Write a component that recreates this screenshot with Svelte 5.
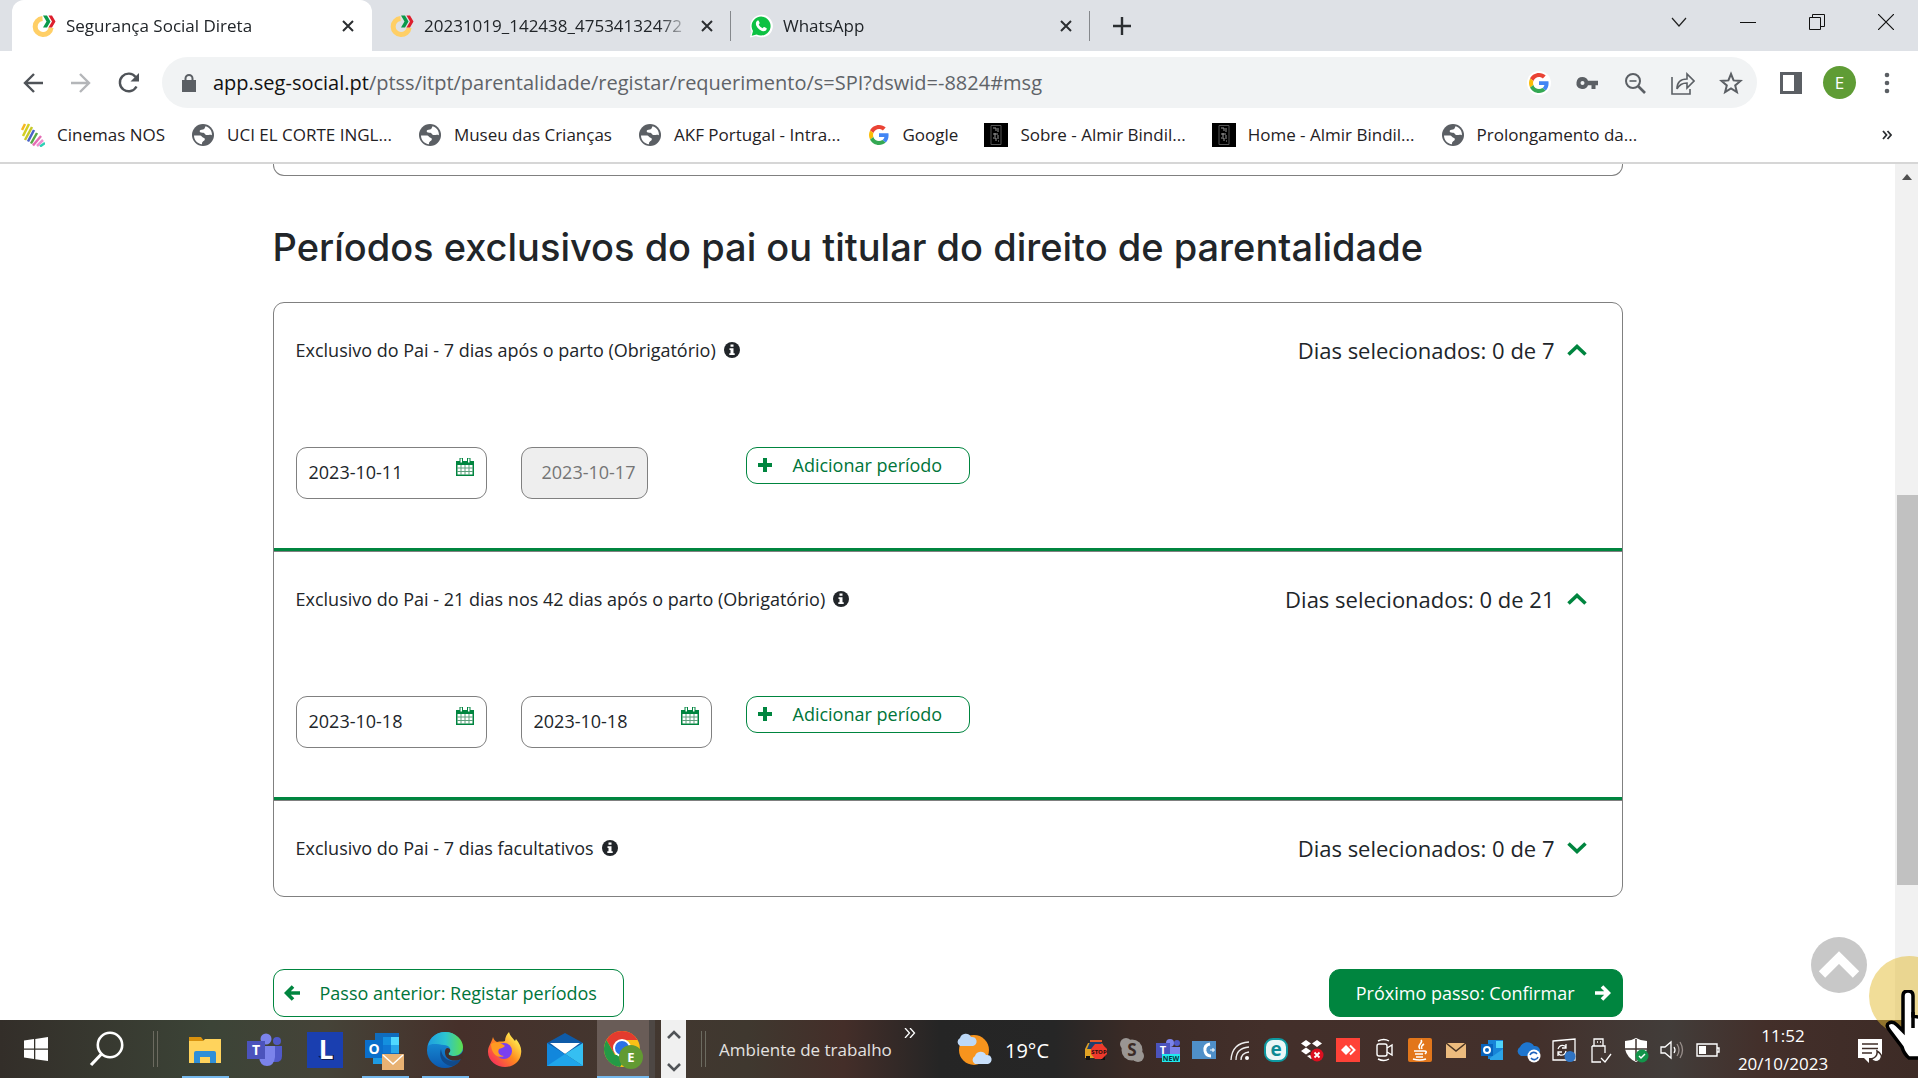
<script>
  const tabs = [
    { title: 'Segurança Social Direta', icon: 'ss', active: true },
    { title: '20231019_142438_47534132472', icon: 'ss', active: false },
    { title: 'WhatsApp', icon: 'wa', active: false },
  ];

  const bookmarks = [
    { icon: 'nos', label: 'Cinemas NOS' },
    { icon: 'globe', label: 'UCI EL CORTE INGL...' },
    { icon: 'globe', label: 'Museu das Crianças' },
    { icon: 'globe', label: 'AKF Portugal - Intra...' },
    { icon: 'google', label: 'Google' },
    { icon: 'dark', label: 'Sobre - Almir Bindil...' },
    { icon: 'dark', label: 'Home - Almir Bindil...' },
    { icon: 'globe', label: 'Prolongamento da...' },
  ];

  let sections = $state([
    {
      id: 'p7',
      label: 'Exclusivo do Pai - 7 dias após o parto (Obrigatório)',
      count: 'Dias selecionados: 0 de 7',
      open: true,
      from: '2023-10-11',
      to: '2023-10-17',
      locked: true,
    },
    {
      id: 'p21',
      label: 'Exclusivo do Pai - 21 dias nos 42 dias após o parto (Obrigatório)',
      count: 'Dias selecionados: 0 de 21',
      open: true,
      from: '2023-10-18',
      to: '2023-10-18',
      locked: false,
    },
    {
      id: 'f7',
      label: 'Exclusivo do Pai - 7 dias facultativos',
      count: 'Dias selecionados: 0 de 7',
      open: false,
      from: '',
      to: '',
      locked: false,
    },
  ]);

  const apps = [
    { name: 'Explorador', icon: 'explorer', running: true },
    { name: 'Teams', icon: 'teams', running: false },
    { name: 'L', icon: 'ell', running: false },
    { name: 'Outlook', icon: 'outlook', running: true },
    { name: 'Edge', icon: 'edge', running: true },
    { name: 'Firefox', icon: 'firefox', running: false },
    { name: 'Correio', icon: 'mail', running: false },
    { name: 'Chrome', icon: 'chrome', running: true },
  ];

  const tray = ['taxi', 'skype', 'teamsnew', 'phone', 'wifi', 'eset', 'dropbox', 'anydesk', 'camera', 'java', 'envelope', 'outlooksmall', 'onedrive', 'update', 'usb', 'shield', 'volume', 'battery'];
</script>

{#snippet google()}
  <svg width="20" height="20" viewBox="0 0 48 48" aria-hidden="true">
    <path fill="#EA4335" d="M24 9.5c3.54 0 6.71 1.22 9.21 3.6l6.85-6.85C35.9 2.38 30.47 0 24 0 14.62 0 6.51 5.38 2.56 13.22l7.98 6.19C12.43 13.72 17.74 9.5 24 9.5z" />
    <path fill="#4285F4" d="M46.98 24.55c0-1.57-.15-3.09-.38-4.55H24v9.02h12.94c-.58 2.96-2.26 5.48-4.78 7.18l7.73 6c4.51-4.18 7.09-10.36 7.09-17.65z" />
    <path fill="#FBBC05" d="M10.53 28.59c-.48-1.45-.76-2.99-.76-4.59s.27-3.14.76-4.59l-7.98-6.19C.92 16.46 0 20.12 0 24s.92 7.54 2.56 10.78l7.97-6.19z" />
    <path fill="#34A853" d="M24 48c6.48 0 11.93-2.13 15.89-5.81l-7.73-6c-2.15 1.45-4.92 2.3-8.16 2.3-6.26 0-11.57-4.22-13.47-9.91l-7.98 6.19C6.51 42.62 14.62 48 24 48z" />
  </svg>
{/snippet}

{#snippet siteIcon(name)}
  {#if name === 'ss'}
    <svg width="24" height="24" viewBox="0 0 24 24" aria-hidden="true">
      <path d="M10.5 4.6a8 8 0 1 0 8.6 9" fill="none" stroke="#ffcf66" stroke-width="5" />
      <path d="M11 1.500h4l3.500 5.900L15 13.500h-4l3.500-6.100z" fill="#0b9a4a" />
      <path d="M16.500 1.500h3.500l3.500 5.900-3.500 6.100h-3.500L20 7.400z" fill="#dd1f2d" />
    </svg>
  {:else if name === 'wa'}
    <svg width="24" height="24" viewBox="0 0 24 24" aria-hidden="true">
      <path d="M1 23.500 2.600 17.400A11.300 11.300 0 1 1 7 21.900z" fill="#fff" />
      <path d="M2.700 21.700 4 17a9.500 9.500 0 1 1 3.600 3.400z" fill="#0dc143" />
      <path d="M8.600 6.500c.5-.2 1-.1 1.200.4l.8 1.900c.1.500-.1.900-.9 1.700.9 1.800 2.100 3 4 3.800.8-1 1.100-1.400 1.600-1.200l2 1c.5.3.5.5.3 1.200-.5 1.500-1.900 2-3.200 1.900-3.900-.6-7.200-4.200-7.500-7.300-.1-1.500.7-3 1.700-3.400z" fill="#fff" />
    </svg>
  {:else if name === 'globe'}
    <svg width="24" height="24" viewBox="0 0 24 24" aria-hidden="true">
      <circle cx="12" cy="12" r="11" fill="#5b5f64" />
      <path d="M3 12.500h5.500c2.500 0 2.500 2 4 2.300 1.500.4 1.800 1.400.8 2.700-.9 1-2.300.8-2.300 3.800C6.500 20.800 3 17 3 12.500z" fill="#fff" />
      <path d="M14.500 3.300C13.500 5 14 6 12 6.500c-2 .4-3.500.3-3.300 2 .2 1.500 2.300 1 3.800 1.300 1.300.3 1.200 1.800 2.700 2.200 2 .5 3.300-.8 5.700.3.400-4.300-2.400-8-6.400-9z" fill="#fff" />
    </svg>
  {:else if name === 'nos'}
    <svg width="24" height="24" viewBox="0 0 24 24" aria-hidden="true" fill="none" stroke-width="2.500">
      <path d="M1 7 4 1" stroke="#f5b921" />
      <path d="M2 13 8 1" stroke="#d4cf24" />
      <path d="M4 17 11 4" stroke="#c6c92a" />
      <path d="M7 18.500 13 7" stroke="#4a63c8" />
      <path d="M10 20.500 16 10" stroke="#56a845" />
      <path d="M12 22.500 20 13" stroke="#e46cb4" />
      <path d="M16 23 22 17" stroke="#ef8ed0" />
      <path d="M19 23.500 24 20" stroke="#2fcfb4" />
    </svg>
  {:else if name === 'dark'}
    <svg width="24" height="24" viewBox="0 0 24 24" aria-hidden="true">
      <path d="M0 0h24v24H0z" fill="#000" />
      <path d="M7 2.500h10v19H7z" fill="none" stroke="#555" />
      <path d="M9 5h3v3m2-3v4m-5 2h5m-3-1v4m3-2v4M9 15h3v3m2 0h1" fill="none" stroke="#999" />
    </svg>
  {:else}
    {@render google()}
  {/if}
{/snippet}

{#snippet cross()}
  <svg width="12" height="12" viewBox="0 0 12 12" aria-hidden="true"><path d="M1 1 11 11M11 1 1 11" stroke="#2b2e31" stroke-width="2" /></svg>
{/snippet}

{#snippet calendar()}
  <svg width="18" height="18" viewBox="0 0 18 18" aria-hidden="true">
    <path d="M0 3h18v15H0z" fill="#00853f" />
    <path d="M1.500 7h15v9.500h-15z" fill="#fff" />
    <path d="M5 7v10M9 7v10M13 7v10M1 10h16M1 13.500h16" stroke="#5d9f7c" />
    <path d="M4 0h2.500v5H4zM11.500 0H14v5h-2.500z" fill="#fff" stroke="#00853f" />
  </svg>
{/snippet}

{#snippet appIcon(name)}
  {#if name === 'explorer'}
    <svg width="36" height="36" viewBox="0 0 36 36" aria-hidden="true">
      <path d="M2 5h12l3 4H2z" fill="#d9920e" />
      <path d="M2 9h14l2-2h16v24H2z" fill="#ffd35c" />
      <path d="M7 31V21q0-2 2-2h18q2 0 2 2v10h-6v-6H13v6z" fill="#2f8fd8" />
    </svg>
  {:else if name === 'teams'}
    <svg width="36" height="36" viewBox="0 0 36 36" aria-hidden="true">
      <circle cx="19" cy="7" r="5.500" fill="#7b83eb" />
      <circle cx="30" cy="9" r="4" fill="#5059c9" />
      <path d="M25 14h10v10q0 6-6 6h-4z" fill="#5059c9" />
      <path d="M12 14h16v11q-1 9-8 9t-8-9z" fill="#7b83eb" />
      <path d="M0 9h18v18H0z" fill="#4b53bc" />
      <text x="9" y="23" class="glyph" font-size="14">T</text>
    </svg>
  {:else if name === 'ell'}
    <svg width="36" height="36" viewBox="0 0 36 36" aria-hidden="true">
      <path d="M0 0h36v36H0z" fill="#1a3fb0" />
      <path d="M11 24 15 28h12V23z" fill="#0c1f55" />
      <text x="19" y="27" class="glyph" font-size="26">L</text>
    </svg>
  {:else if name === 'outlook'}
    <svg width="40" height="40" viewBox="0 0 40 40" aria-hidden="true">
      <path d="M10 3h24v26H10z" fill="#0f6cbd" />
      <path d="M18 7h8v8h-8z" fill="#1490df" /><path d="M26 7h8v8h-8z" fill="#50d9ff" />
      <path d="M26 15h8v8h-8z" fill="#28a8ea" /><path d="M18 15h8v8h-8z" fill="#0f78d4" />
      <path d="M8 24h20v10H8z" fill="#1e9be3" />
      <path d="M0 10h18v18H0z" fill="#0a6fcb" />
      <text x="9" y="24" class="glyph" font-size="14">O</text>
      <path d="M17 24h22v16H17z" fill="#e8b273" />
      <path d="m18 25 10 9 10-9" fill="none" stroke="#fff" stroke-width="1.500" />
    </svg>
  {:else if name === 'edge'}
    <svg width="36" height="36" viewBox="0 0 36 36" aria-hidden="true">
      <defs>
        <linearGradient id="edgeTop" x1="0" x2="1"><stop offset="0" stop-color="#1e9fe0" /><stop offset=".5" stop-color="#2cc4d0" /><stop offset="1" stop-color="#5fe04c" /></linearGradient>
        <linearGradient id="edgeBody" x1="0" x2="0" y1="0" y2="1"><stop offset="0" stop-color="#1a9de0" /><stop offset="1" stop-color="#0c59b0" /></linearGradient>
      </defs>
      <circle cx="18" cy="18" r="18" fill="url(#edgeBody)" />
      <path d="M1 14C3 5 10 0 18 0c11 0 18 8 18 15 0 6-5 9-9 9-5 0-6-2-5-3 3-4 0-8-5-8-7-1-13-2-16 1z" fill="url(#edgeTop)" />
      <path d="M14 17c-3 9 3 17 12 17 3-1 6-3 8-7-9 5-19 1-20-10z" fill="#114a8b" />
      <path d="M22 21c-1 1 0 3 5 3 4 0 7-1 9-5l1 6-3 2c-8 4-17 0-16-8 0-2 2-3 2-3 4 0 4 3 2 5z" fill="#432f2a" />
    </svg>
  {:else if name === 'firefox'}
    <svg width="36" height="36" viewBox="0 0 36 36" aria-hidden="true">
      <defs><linearGradient id="fox" x1="1" x2="0" y1="0" y2="1"><stop offset=".2" stop-color="#ffe14a" /><stop offset=".5" stop-color="#ff8a1e" /><stop offset="1" stop-color="#f5156c" /></linearGradient></defs>
      <path d="M22 0c1 4 3 5 6 9l1-2c4 5 6 9 5 15-1 8-8 13-16 13S1 29 1 20c0-6 3-8 5-15 1 3 2 4 4 5 3-1 6 0 8-1 0-4 2-7 4-9z" fill="url(#fox)" />
      <circle cx="17" cy="19" r="8" fill="#7a3ff0" />
      <path d="M4 12c5-3 10-1 14 2-2 2-4 2-6 3-2 4 1 7 5 7-6 3-13-2-13-12z" fill="#ff9a22" />
    </svg>
  {:else if name === 'mail'}
    <svg width="36" height="36" viewBox="0 0 36 36" aria-hidden="true">
      <path d="M0 11 18 1l18 10v10H0z" fill="#0e5ba8" />
      <path d="M3 11h30L18 22z" fill="#fff" />
      <path d="M0 11 18 22 36 34H0z" fill="#1287dc" />
      <path d="M36 11 18 22 36 34z" fill="#35bff2" />
      <path d="M0 34 18 22l18 12z" fill="#1fa5ea" />
    </svg>
  {:else}
    <svg width="40" height="40" viewBox="0 0 40 40" aria-hidden="true">
      <circle cx="19" cy="19" r="18" fill="#fbc116" />
      <path d="M3.400 10A18 18 0 0 1 34.600 10H19l-7.800 13.500z" fill="#e33b2e" />
      <path d="M3.400 10a18 18 0 0 0 13.600 27l8-12H12z" fill="#249a46" />
      <circle cx="19" cy="18" r="9" fill="#fff" /><circle cx="19" cy="18" r="7" fill="#2b72e8" />
      <circle cx="28" cy="27" r="12" fill="#629a32" />
      <text x="28" y="32" class="glyph" font-size="13">E</text>
    </svg>
  {/if}
{/snippet}

{#snippet trayIcon(name)}
  <svg width="26" height="26" viewBox="-1 -1 26 26" aria-hidden="true" fill="none" stroke="none">
    {#if name === 'taxi'}
      <path d="M6 2h12v2H6z" fill="#e25b2a" /><path d="M4 5h14l3 6v9H1v-9z" fill="#e0a224" /><path d="M6 4h11l3 7H3z" fill="#1f3f70" />
      <path d="M2 18h4v4H2zM17 18h4v4h-4z" fill="#111" />
      <path d="M11 6h7l5 5v5l-5 5h-7l-4-5v-5z" fill="#ee3a2c" />
      <text x="15" y="16" font-size="6" class="glyph" style:fill="#2a0d0a">STOP</text>
    {:else if name === 'skype'}
      <circle cx="12" cy="12" r="10.500" fill="#9a9693" /><circle cx="6" cy="6" r="6" fill="#9a9693" /><circle cx="18" cy="18" r="6" fill="#9a9693" />
      <text x="12" y="18" font-size="17" class="glyph" style:fill="#3b2b26">S</text>
    {:else if name === 'teamsnew'}
      <circle cx="14" cy="5" r="4" fill="#7b83eb" /><circle cx="21" cy="5" r="3" fill="#5059c9" /><path d="M12 9h12v9H12z" fill="#7b83eb" />
      <path d="M0 5h14v15H0z" fill="#4b53bc" /><text x="7" y="16" font-size="11" class="glyph">T</text>
      <path d="M6 16h18v8H6z" fill="#20e8ee" /><text x="15" y="23" font-size="7" class="glyph" style:fill="#05363c">NEW</text>
    {:else if name === 'phone'}
      <path d="M0 3h24v18H0z" fill="#4f8fc8" /><path d="M18 6q-6 1-5 7 1 5 6 5" stroke="#fff" stroke-width="3" /><path d="M18 12h5m-2-2v4" stroke="#fff" />
    {:else if name === 'wifi'}
      <g stroke="#eee" stroke-width="1.300"><path d="M3 22Q4 5 21 4M8 22Q8 10 21 9M13 22q0-7 8-8" /></g><circle cx="19" cy="20" r="2" fill="#fff" />
    {:else if name === 'eset'}
      <rect x="1" y="1" width="22" height="22" rx="8" fill="#e9f7f7" stroke="#0d98a0" stroke-width="2" /><text x="12" y="18" font-size="19" class="glyph" style:fill="#0b8a94">e</text>
    {:else if name === 'dropbox'}
      <path d="m6 2 5 3.500L6 9 1 5.500zM17 2l5 3.500L17 9l-5-3.500zM6 9.500l5 3.500-5 3.500L1 13zM7 18l4 3 2-2-3-2z" fill="#fff" />
      <circle cx="17" cy="17" r="6.500" fill="#dc1020" /><path d="m14.500 14.500 5 5m0-5-5 5" stroke="#fff" stroke-width="1.800" />
    {:else if name === 'anydesk'}
      <path d="M0 0h24v24H0z" fill="#ff4237" /><path d="m10 7 5 5-5 5-5-5z" fill="#fff" /><path d="m14 7.500 4.500 4.500-4.500 4.500" stroke="#fff" stroke-width="2" />
    {:else if name === 'camera'}
      <g stroke="#fff" stroke-width="1.400"><rect x="5" y="6" width="10" height="12" rx="2" /><path d="m15 10 5-3v10l-5-3M6 3q6-3 11 0M6 21q6 3 11 0" /></g>
    {:else if name === 'java'}
      <rect width="24" height="24" rx="2" fill="#e2761b" /><path d="M13 2c3 3-5 5-1 9M16 6c-3 2-3 3-2 5M6 13h10q4 0 1 3M7 16h8M8 19h7M5 21q7 2 13 0" stroke="#fff" stroke-width="1.600" />
    {:else if name === 'envelope'}
      <path d="M2 5h20v15H2z" fill="#ecbb7e" /><path d="m2 5 10 8 10-8" stroke="#4a3524" stroke-width="1.600" />
    {:else if name === 'outlooksmall'}
      <path d="M8 2h15v19H8z" fill="#1784d8" /><path d="M16 3h7v7h-7z" fill="#4fd4fa" /><path d="m10 20 13-9v11H10z" fill="#2ba4e8" /><path d="M1 6h12v12H1z" fill="#0864be" /><circle cx="7" cy="12" r="3" stroke="#fff" stroke-width="2" />
    {:else if name === 'onedrive'}
      <path d="M5 18a5 5 0 0 1-1-9 8 8 0 0 1 14-1 5 5 0 0 1 2 10z" fill="#1e76cf" /><circle cx="18" cy="18" r="6.500" fill="#fff" /><path d="M14 17a4 4 0 0 1 7-1m1 3a4 4 0 0 1-7 1" stroke="#1e62bd" stroke-width="1.600" />
    {:else if name === 'update'}
      <path d="M1 3 23 1v21H1z" stroke="#fff" stroke-width="1.300" /><path d="M6 11q2-5 7-3l1 2M14 13q-1 5-6 4l-2-2M14 6v4h-4M6 18v-4h4" stroke="#fff" stroke-width="1.300" /><circle cx="18" cy="18.500" r="5.500" fill="#2f74c4" />
    {:else if name === 'usb'}
      <path d="M6 8V1h9v7M4 8h13v7M4 8v16h9M9 4h1m2 0h1M13 20l4 4 6-8" stroke="#fff" stroke-width="1.300" />
    {:else if name === 'shield'}
      <path d="M12 0q5 3 11 3v8q-2 9-11 13Q3 20 1 11V3q6 0 11-3z" fill="#fff" /><path d="M12 1v22M1 11h22" stroke="#3f3530" stroke-width="1.500" /><circle cx="18" cy="18" r="6.500" fill="#12944a" /><path d="m15 18 2 2 4-4" stroke="#fff" stroke-width="1.500" />
    {:else if name === 'volume'}
      <path d="M1 9h4l6-5v16l-6-5H1z" stroke="#fff" stroke-width="1.300" /><path d="M14 9q2 3 0 6" stroke="#fff" stroke-width="1.300" /><path d="M17 6q4 6 0 12M20 4q5 8 0 16" stroke="#998f8b" stroke-width="1.300" />
    {:else}
      <path d="M1 6h20v12H1zM21 10h2v4h-2" stroke="#fff" stroke-width="1.400" /><path d="M3 8h7v8H3z" fill="#fff" />
    {/if}
  </svg>
{/snippet}

<div class="screen">
  <header class="browser">
    <div class="tabstrip">
      {#each tabs as tab}
        <div class="tab" class:active={tab.active}>
          {@render siteIcon(tab.icon)}
          <span class="tab-title">{tab.title}</span>
          <button class="plain" aria-label="Fechar separador">{@render cross()}</button>
        </div>
      {/each}
      <button class="plain new-tab" aria-label="Novo separador">
        <svg width="18" height="18" viewBox="0 0 18 18"><path d="M9 0v18M0 9h18" stroke="#2b2e31" stroke-width="2.400" /></svg>
      </button>
      <div class="window-controls">
        <button class="plain" aria-label="Pesquisar separadores"><svg width="16" height="16" viewBox="0 0 16 16"><path d="m1 4 7 8 7-8" fill="none" stroke="#222" stroke-width="1.200" /></svg></button>
        <button class="plain" aria-label="Minimizar"><svg width="16" height="16" viewBox="0 0 16 16"><path d="M0 8.500h16" stroke="#111" /></svg></button>
        <button class="plain" aria-label="Restaurar"><svg width="16" height="16" viewBox="0 0 16 16"><path d="M.5 3.500h11v12H.5zM3.500 3V.5h12v12H12" fill="none" stroke="#111" /></svg></button>
        <button class="plain" aria-label="Fechar"><svg width="16" height="16" viewBox="0 0 16 16"><path d="m0 0 16 16M16 0 0 16" stroke="#111" stroke-width="1.200" /></svg></button>
      </div>
    </div>

    <div class="toolbar">
      <button class="plain nav" aria-label="Retroceder"><svg width="22" height="22" viewBox="0 0 22 22"><path d="M21 11H3m9-9-9 9 9 9" fill="none" stroke="#4f5358" stroke-width="2.400" /></svg></button>
      <button class="plain nav" aria-label="Avançar"><svg width="22" height="22" viewBox="0 0 22 22"><path d="M1 11h18m-9-9 9 9-9 9" fill="none" stroke="#b4b6b9" stroke-width="2.400" /></svg></button>
      <button class="plain nav" aria-label="Atualizar"><svg width="22" height="22" viewBox="0 0 22 22"><path d="M18.500 14.500A8.800 8.800 0 1 1 17.600 5" fill="none" stroke="#4f5358" stroke-width="2.400" /><path d="M21 1v8.500h-8.500z" fill="#4f5358" /></svg></button>
      <div class="address">
        <svg width="14" height="18" viewBox="0 0 14 18" aria-hidden="true"><path d="M0 6h14v12H0z" fill="#5b5f64" /><path d="M3.500 7V4.500a3.500 3.500 0 0 1 7 0V7" fill="none" stroke="#5b5f64" stroke-width="2" /></svg>
        <span class="url"><b>app.seg-social.pt</b>/ptss/itpt/parentalidade/registar/requerimento/s=SPI?dswid=-8824#msg</span>
        <div class="address-actions">
          <button class="plain round" aria-label="Google">{@render google()}</button>
          <button class="plain" aria-label="Palavras-passe"><svg width="24" height="24" viewBox="0 0 24 24"><path d="M7.500 6a6 6 0 1 0 5.500 8.300h3.500V18h4v-3.700H23v-4.600H13A6 6 0 0 0 7.500 6zm0 4a2 2 0 1 1 0 4 2 2 0 0 1 0-4z" fill="#5b5f64" fill-rule="evenodd" /></svg></button>
          <button class="plain" aria-label="Zoom"><svg width="24" height="24" viewBox="0 0 24 24"><circle cx="10" cy="10" r="7" fill="none" stroke="#5b5f64" stroke-width="2" /><path d="m15 15 7 7" stroke="#5b5f64" stroke-width="2.600" /><path d="M6.500 10h7" stroke="#5b5f64" stroke-width="1.600" /></svg></button>
          <button class="plain" aria-label="Partilhar"><svg width="24" height="24" viewBox="0 0 24 24"><path d="M1 6v17h18v-5M6 18c0-6 3-10 10-10V3l7 7-7 7v-5c-5 0-8 2-10 6z" fill="none" stroke="#5b5f64" stroke-width="1.600" /></svg></button>
          <button class="plain" aria-label="Marcador"><svg width="24" height="24" viewBox="0 0 24 24"><path d="m12 3 2.600 6.400 6.900.5-5.300 4.500 1.700 6.800-5.900-3.700-5.900 3.700 1.700-6.800L2.500 9.900l6.900-.5z" fill="none" stroke="#5b5f64" stroke-width="2" /></svg></button>
        </div>
      </div>
      <button class="plain panel" aria-label="Painel lateral"><svg width="22" height="22" viewBox="0 0 22 22"><path d="M0 0h22v22H0z" fill="#5b5f64" /><path d="M3 3h11v16H3z" fill="#fff" /></svg></button>
      <button class="plain avatar" aria-label="Perfil">E</button>
      <button class="plain more" aria-label="Menu"><svg width="6" height="22" viewBox="0 0 6 22" fill="#5b5f64"><circle cx="3" cy="3" r="2.300" /><circle cx="3" cy="11" r="2.300" /><circle cx="3" cy="19" r="2.300" /></svg></button>
    </div>

    <nav class="bookmarks">
      {#each bookmarks as mark}
        <a href="#bookmark"><span class="mark-icon">{@render siteIcon(mark.icon)}</span>{mark.label}</a>
      {/each}
      <button class="plain overflow" aria-label="Mais marcadores"><svg width="10" height="10" viewBox="0 0 10 10"><path d="m1 1 3.500 4L1 9M5.500 1 9 5 5.500 9" fill="none" stroke="#2b2e31" stroke-width="1.800" /></svg></button>
    </nav>
  </header>

  <div class="viewport">
    <main>
      <div class="page">
        <div class="previous-card"></div>
        <h1>Períodos exclusivos do pai ou titular do direito de parentalidade</h1>
        <div class="card">
          {#each sections as section}
            <section>
              <div class="section-head">
                <h2>{section.label}</h2>
                <svg class="info" width="16" height="16" viewBox="0 0 16 16" aria-hidden="true"><circle cx="8" cy="8" r="8" fill="#212529" /><path d="M6.500 2.500h3v2.300h-3zM5.500 6.200h4v5h1.200V13H5.300v-1.800h1.200V8h-1z" fill="#fff" /></svg>
                <span class="count">{section.count}</span>
                <button class="plain" aria-label="Expandir ou recolher" aria-expanded={section.open} onclick={() => (section.open = !section.open)}>
                  <svg class:down={!section.open} width="20" height="12" viewBox="0 0 20 12"><path d="m1.500 10.500 8.500-8 8.500 8" fill="none" stroke="#00853f" stroke-width="3.600" /></svg>
                </button>
              </div>
              {#if section.open}
                <div class="periods">
                  <div class="slot">
                    <div class="field">
                      <input type="text" aria-label="Data de início" id="{section.id}-from" bind:value={section.from} />
                      <button class="plain" aria-label="Abrir calendário">{@render calendar()}</button>
                    </div>
                  </div>
                  <div class="slot">
                    {#if section.locked}
                      <input class="locked" type="text" aria-label="Data de fim" value={section.to} disabled />
                    {:else}
                      <div class="field">
                        <input type="text" aria-label="Data de fim" id="{section.id}-to" bind:value={section.to} />
                        <button class="plain" aria-label="Abrir calendário">{@render calendar()}</button>
                      </div>
                    {/if}
                  </div>
                  <button class="outline add">
                    <svg width="14" height="14" viewBox="0 0 14 14" aria-hidden="true"><path d="M7 0v14M0 7h14" stroke="#00853f" stroke-width="4" /></svg>
                    Adicionar período
                  </button>
                </div>
              {/if}
            </section>
          {/each}
        </div>
        <div class="steps">
          <button class="outline step">
            <svg width="16" height="16" viewBox="0 0 16 16" aria-hidden="true"><path d="M16 8H3m6-6.500L2.500 8 9 14.500" fill="none" stroke="#00853f" stroke-width="3.600" /></svg>
            Passo anterior: Registar períodos
          </button>
          <button class="outline step primary">
            Próximo passo: Confirmar
            <svg width="16" height="16" viewBox="0 0 16 16" aria-hidden="true"><path d="M0 8h13M7 1.500 13.500 8 7 14.500" fill="none" stroke="#fff" stroke-width="3.600" /></svg>
          </button>
        </div>
      </div>
      <button class="plain to-top" aria-label="Voltar ao topo"><svg width="42" height="28" viewBox="0 0 42 28"><path d="m4 23.500 17-17 17 17" fill="none" stroke="#fff" stroke-width="9" /></svg></button>
    </main>
    <div class="scrollbar">
      <svg width="10" height="6" viewBox="0 0 10 6" aria-hidden="true"><path d="m0 6 5-6 5 6z" fill="#505050" /></svg>
      <div class="track"><div class="thumb"></div></div>
      <svg width="10" height="6" viewBox="0 0 10 6" aria-hidden="true"><path d="m0 0 5 6 5-6z" fill="#505050" /></svg>
    </div>
  </div>

  <footer class="taskbar">
    <button class="plain start" aria-label="Iniciar"><svg width="26" height="26" viewBox="0 0 26 26"><path d="m1 4.500 10-1.400v9.400H1zM12.300 3 25 1v11.500H12.300zM1 13.700h10V23L1 21.500zM12.300 13.700H25V25l-12.700-1.800z" fill="#fff" /></svg></button>
    <button class="plain search" aria-label="Procurar"><svg width="36" height="36" viewBox="0 0 36 36"><circle cx="21" cy="14" r="12.200" fill="none" stroke="#fff" stroke-width="2.600" /><path d="M12.500 23 2 34" stroke="#fff" stroke-width="3.200" /></svg></button>
    <span class="grip"></span>
    <div class="apps">
      {#each apps as app}
        <button class="plain app" class:running={app.running} class:current={app.icon === 'chrome'} aria-label={app.name}>{@render appIcon(app.icon)}</button>
      {/each}
    </div>
    <span class="stack"></span>
    <div class="app-scroll">
      <svg width="14" height="10" viewBox="0 0 14 10" aria-hidden="true"><path d="m1 8 6-6 6 6" fill="none" stroke="#505357" stroke-width="2.600" /></svg>
      <svg width="14" height="10" viewBox="0 0 14 10" aria-hidden="true"><path d="m1 2 6 6 6-6" fill="none" stroke="#505357" stroke-width="2.600" /></svg>
    </div>
    <span class="grip second"></span>
    <span class="desktop">Ambiente de trabalho</span>
    <svg class="chevrons" width="12" height="10" viewBox="0 0 12 10" aria-hidden="true"><path d="m1 0 4.500 5L1 10M6 0l4.500 5L6 10" fill="none" stroke="#fff" stroke-width="1.300" /></svg>
    <div class="weather">
      <svg width="38" height="36" viewBox="0 0 38 36" aria-hidden="true">
        <circle cx="19" cy="18" r="15" fill="#f7941d" />
        <path d="M5 14a4.500 4.500 0 0 1 0-8 6 6 0 0 1 11-1 4 4 0 0 1 2 9z" fill="#bcd8f7" />
        <path d="M20 32a4.500 4.500 0 0 1 0-8 6 6 0 0 1 11-1 4.500 4.500 0 0 1 2 9z" fill="#c8dffa" />
      </svg>
      19°C
    </div>
    <div class="tray">
      {#each tray as icon}
        <span class="tray-cell">{@render trayIcon(icon)}</span>
      {/each}
    </div>
    <div class="clock"><span>11:52</span><span>20/10/2023</span></div>
    <button class="plain notice" aria-label="Notificações"><svg width="26" height="26" viewBox="0 0 26 26"><path d="M1 1h24v19H12v5l-5-5H1z" fill="#fff" /><path d="M5 6h16M5 10.500h16M5 15h10" stroke="#3f2e29" stroke-width="1.500" /><path d="M20 13q1 6-6 8 4 5 9 1 4-5-3-9z" fill="#fff" stroke="#3f2e29" stroke-width="1.500" /></svg></button>
  </footer>

  <div class="pointer" aria-hidden="true">
    <div class="halo"></div>
    <svg class="hand" width="44" height="72" viewBox="0 0 44 72">
      <path d="M18 6q0-5 5-5t5 5v20l10 2q5 1 6 6v20q-2 14-9 14H24q-5-4-7-11L5 41q-5-6-1-8 4-2 8 2l6 6z" fill="#fff" stroke="#000" stroke-width="3.500" />
      <path d="M28 22v16" stroke="#000" stroke-width="3.500" />
    </svg>
  </div>
</div>

<style>
  :global(body) { background: #fff; }
  .screen {
    position: relative;
    display: flex;
    flex-direction: column;
    height: 100vh;
    overflow: hidden;
    font-family: "Open Sans", "Noto Sans", sans-serif;
    color: #212529;
  }
  .plain {
    display: inline-flex;
    align-items: center;
    justify-content: center;
    padding: 0;
    border: 0;
    background: none;
    font: inherit;
    color: inherit;
  }
  svg { flex: none; display: block; }
  .glyph { fill: #fff; font-family: "Open Sans", sans-serif; font-weight: 700; text-anchor: middle; }

  .browser { border-bottom: 2px solid #d6d6d6; font-size: 17px; }
  .tabstrip { display: flex; align-items: stretch; height: 51px; padding-left: 12px; background: #dee1e6; }
  .tab {
    position: relative;
    display: flex;
    align-items: center;
    gap: 10px;
    box-sizing: border-box;
    width: 359px;
    padding: 0 18px;
  }
  .tab.active { width: 360px; padding-left: 20px; background: #fff; border-radius: 12px 12px 0 0; }
  .tab:not(.active)::after { content: ""; position: absolute; right: 0; top: 11px; height: 30px; border-right: 1px solid #85888c; }
  .tab-title {
    flex: 1;
    min-width: 0;
    overflow: hidden;
    white-space: nowrap;
    mask-image: linear-gradient(to right, #000 88%, transparent);
  }
  .new-tab { margin-left: 23px; }
  .window-controls { display: flex; margin: 0 24px 8px auto; gap: 53px; }

  .toolbar { display: flex; align-items: center; height: 63px; padding: 0 22px; }
  .nav { width: 22px; margin-right: 26px; }
  .address {
    display: flex;
    align-items: center;
    flex: 1;
    height: 51px;
    margin-left: -4px;
    padding: 0 14px 0 20px;
    border-radius: 26px;
    background: #f1f3f4;
  }
  .url { flex: 1; margin-left: 17px; font-size: 20px; color: #5f6368; white-space: nowrap; }
  .url b { font-weight: 400; color: #111; }
  .address-actions { display: flex; gap: 24px; }
  .round { width: 24px; height: 24px; border-radius: 50%; background: #fff; }
  .panel { margin-left: 23px; }
  .avatar { width: 33px; height: 33px; margin-left: 21px; border-radius: 50%; background: #5f9c35; color: #fff; font-size: 17px; }
  .more { margin: 0 6px 0 28px; }

  .bookmarks { display: flex; align-items: center; height: 41px; gap: 26px; padding: 0 26px 7px 21px; }
  .bookmarks a { display: flex; align-items: center; gap: 12px; color: #1f2124; text-decoration: none; white-space: nowrap; }
  .mark-icon { display: flex; justify-content: center; width: 24px; }
  .overflow { margin-left: auto; }

  .viewport { display: flex; flex: 1; min-height: 0; }
  main { position: relative; flex: 1; min-width: 0; overflow: hidden; }
  .page { max-width: 1350px; margin: 0 auto; }
  .previous-card { height: 11px; border: 1px solid #808080; border-top: 0; border-radius: 0 0 11px 11px; }
  h1 { margin: 0; padding: 57px 0 41px; font: 500 38px/28px Inter, "Open Sans", sans-serif; white-space: nowrap; }
  .card { border: 1px solid #808080; border-radius: 11px; font-size: 18px; }
  section:not(:last-child) { border-bottom: 1px solid #808080; }
  section:not(:last-child)::after { content: ""; display: block; height: 3px; background: #00853f; }
  .section-head { display: flex; align-items: center; box-sizing: border-box; height: 96px; padding: 0 35px 2px 22px; }
  section:last-child .section-head { height: 95px; }
  h2 { margin: 0; font-size: 18px; font-weight: 400; }
  .info { margin-left: 8px; }
  .count { margin-left: auto; margin-right: 12px; font-size: 22px; }
  .down { transform: rotate(180deg); }
  .periods { display: flex; align-items: flex-start; padding: 48px 22px 49px; }
  .slot { width: 225px; }
  .field {
    display: flex;
    box-sizing: border-box;
    width: 191px;
    height: 52px;
    padding: 0 12px;
    border: 1px solid #808080;
    border-radius: 11px;
  }
  input { min-width: 0; padding: 0 0 2px; border: 0; background: none; font: inherit; color: inherit; flex: 1; }
  .field .plain { padding-bottom: 12px; }
  .locked {
    box-sizing: border-box;
    width: 127px;
    height: 52px;
    padding-left: 20px;
    border: 1px solid #808080;
    border-radius: 11px;
    background: #eee;
    color: #757575;
  }
  .outline {
    display: flex;
    align-items: center;
    gap: 20px;
    border: 1px solid #00853f;
    border-radius: 11px;
    background: #fff;
    color: #00753a;
    font: inherit;
    white-space: nowrap;
  }
  .add { width: 224px; height: 37px; padding: 0 11px 2px; gap: 21px; font-size: 18px; }
  .steps { display: flex; justify-content: space-between; margin-top: 72px; font-size: 18px; }
  .step { height: 48px; padding: 0 26px 0 10px; }
  .step.primary { padding: 0 11px 0 26px; background: #00853f; color: #fff; }
  .to-top { position: absolute; right: 28px; bottom: 27px; width: 56px; height: 56px; border-radius: 50%; background: #c8c8c8; }

  .scrollbar { display: flex; flex-direction: column; align-items: center; box-sizing: border-box; width: 23px; padding: 10px 0; background: #f1f1f1; }
  .track { display: flex; flex-direction: column; flex: 1; align-self: stretch; }
  .track::before { content: ""; flex: 315; }
  .track::after { content: ""; flex: 119; }
  .thumb { flex: 390; margin-left: 2px; background: #c1c1c1; }

  .taskbar {
    display: flex;
    align-items: center;
    height: 58px;
    color: #fff;
    font-size: 20px;
    background: linear-gradient(to right, #332e29, #3c4437 11%, #454338 17%, #46302a 24%, #433730 33%, #3f382f 39%, #442e29 44%, #252525 49%, #262626 55%, #3b2b26 59%, #432f2a 66%, #43302b 80%, #423d3a 87%, #432f2a 92%, #3d2b26);
  }
  .start { margin-left: 23px; }
  .search { margin-left: 40px; }
  .grip { width: 3px; height: 36px; margin-left: 28px; border: solid #6c6b60; border-width: 0 1px; }
  .apps { display: flex; align-self: stretch; margin-left: 17px; }
  .app { box-sizing: border-box; width: 60px; border: solid transparent; border-width: 1px 0 0; }
  .app.running { background: linear-gradient(#76b9ed, #76b9ed) bottom / 47px 2px no-repeat; }
  .app.current { width: 52px; margin-left: 2px; background: linear-gradient(#76b9ed, #76b9ed) bottom / 100% 2px no-repeat #695c57; }
  .stack { align-self: stretch; width: 6px; margin: 0 6px 0 0; background: #4d4744; }
  .app-scroll { display: flex; flex-direction: column; justify-content: space-between; align-items: center; align-self: stretch; width: 25px; padding: 10px 0 6px; box-sizing: border-box; background: #f0f0f0; }
  .grip.second { margin-left: 15px; }
  .desktop { margin-left: 13px; font-size: 17px; color: #e4e2e0; white-space: nowrap; }
  .chevrons { align-self: flex-start; margin: 8px 0 0 12px; }
  .weather { display: flex; align-items: center; gap: 12px; margin-left: auto; margin-right: 29px; padding-top: 2px; }
  .tray { display: flex; padding-top: 2px; }
  .tray-cell { display: flex; justify-content: center; width: 36px; }
  .clock { display: flex; flex-direction: column; align-items: center; width: 114px; padding-top: 2px; font-size: 17px; line-height: 28px; }
  .notice { margin: 4px 35px 0 17px; }

  .pointer { position: absolute; right: 0; bottom: 0; width: 60px; height: 130px; overflow: hidden; pointer-events: none; }
  .halo { position: absolute; left: 11px; top: 8px; width: 80px; height: 80px; border-radius: 50%; background: rgba(228, 188, 50, 0.5); }
  .hand { position: absolute; left: 27px; top: 42px; }
</style>
